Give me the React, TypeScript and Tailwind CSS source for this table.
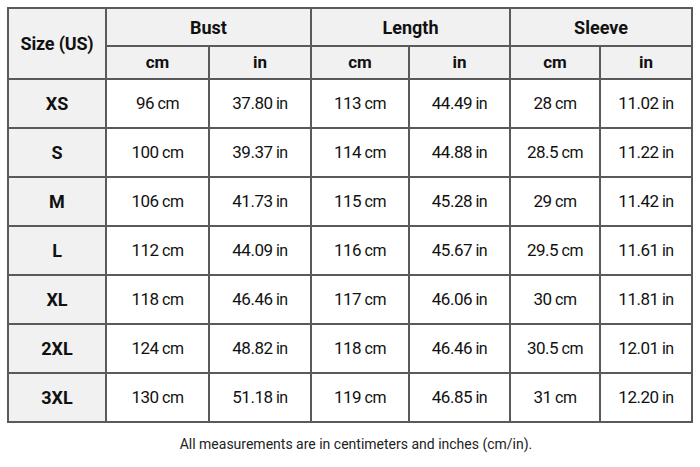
import React from "react";

const rows = [
  ["XS", "96", "37.80", "113", "44.49", "28", "11.02"],
  ["S", "100", "39.37", "114", "44.88", "28.5", "11.22"],
  ["M", "106", "41.73", "115", "45.28", "29", "11.42"],
  ["L", "112", "44.09", "116", "45.67", "29.5", "11.61"],
  ["XL", "118", "46.46", "117", "46.06", "30", "11.81"],
  ["2XL", "124", "48.82", "118", "46.46", "30.5", "12.01"],
  ["3XL", "130", "51.18", "119", "46.85", "31", "12.20"],
];

const cell = "border-2 border-[#5a5a5a] text-center p-0";

export default function App() {
  return (
    <div
      className="w-[700px] h-[467px] bg-white pt-[7px] pl-[7px] text-[#111]"
      style={{ fontFamily: "Roboto, 'Liberation Sans', sans-serif" }}
    >
      <table className="table-fixed border-collapse w-[684px]">
        <colgroup>
          <col className="w-[98px]" />
          <col className="w-[103px]" />
          <col className="w-[102px]" />
          <col className="w-[98px]" />
          <col className="w-[101px]" />
          <col className="w-[90px]" />
          <col className="w-[92px]" />
        </colgroup>
        <thead>
          <tr className="h-[38px] bg-[#f1f1f1]">
            <th
              rowSpan={2}
              className={`${cell} text-[18px] font-bold tracking-[-0.01em]`}
            >
              Size (US)
            </th>
            <th colSpan={2} className={`${cell} text-[18px] font-bold`}>
              Bust
            </th>
            <th colSpan={2} className={`${cell} text-[18px] font-bold`}>
              Length
            </th>
            <th colSpan={2} className={`${cell} text-[18px] font-bold`}>
              Sleeve
            </th>
          </tr>
          <tr className="h-[33px] bg-[#f1f1f1]">
            {["cm", "in", "cm", "in", "cm", "in"].map((u, i) => (
              <th key={i} className={`${cell} text-[17px] font-bold`}>
                {u}
              </th>
            ))}
          </tr>
        </thead>
        <tbody>
          {rows.map((r) => (
            <tr key={r[0]} className="h-[49px]">
              <td className={`${cell} bg-[#f1f1f1] text-[18px] font-bold`}>
                {r[0]}
              </td>
              {r.slice(1).map((v, i) => (
                <td
                  key={i}
                  className={`${cell} text-[17px] tracking-[-0.03em]`}
                >
                  {v}
                  <span className="text-[16px]"> {i % 2 === 0 ? "cm" : "in"}</span>
                </td>
              ))}
            </tr>
          ))}
        </tbody>
      </table>
      <p className="mt-[11px] pl-[14px] text-center text-[14px] text-[#222] w-[684px]">
        All measurements are in centimeters and inches (cm/in).
      </p>
    </div>
  );
}
